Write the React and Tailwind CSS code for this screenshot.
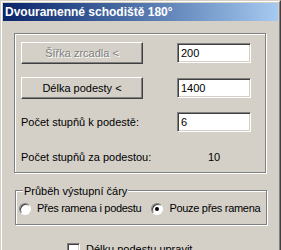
import React from "react";

const font = "font-['Liberation_Sans',Arial,sans-serif]";

function Btn({ children, disabled }) {
  return (
    <div className="w-[122px] h-[22px] flex items-center justify-center border border-t-white border-l-white border-r-[#404040] border-b-[#404040] shadow-[inset_-1px_-1px_0_#808080]">
      <span
        className={
          disabled
            ? "text-[#808080] [text-shadow:1px_1px_0_#fff]"
            : "text-black"
        }
      >
        {children}
      </span>
    </div>
  );
}

function Field({ value }) {
  return (
    <div className="w-[74px] h-[20px] bg-white flex items-center pl-[3px] border border-t-[#808080] border-l-[#808080] border-r-white border-b-white shadow-[inset_1px_1px_0_#404040,inset_-1px_-1px_0_#d4d0c8]">
      {value}
    </div>
  );
}

function Radio({ checked, label }) {
  return (
    <div className="flex items-center gap-[6px] shrink-0 whitespace-nowrap">
      <div className="w-[12px] h-[12px] shrink-0 rounded-full bg-white flex items-center justify-center border border-t-[#808080] border-l-[#808080] border-r-white border-b-white shadow-[inset_1px_1px_0_#404040]">
        {checked && <div className="w-[4px] h-[4px] rounded-full bg-black" />}
      </div>
      <span className="tracking-[-0.3px]">{label}</span>
    </div>
  );
}

export default function App() {
  return (
    <div
      className={`${font} text-[11px] text-black w-[281px] h-[250px] overflow-hidden bg-[#d4d0c8] border border-t-[#d4d0c8] border-l-[#d4d0c8] border-r-[#404040] border-b-0`}
    >
      <div className="h-full border border-t-white border-l-white border-r-[#808080] border-b-0 px-px pt-px">
        <div className="h-[18px] flex items-center pl-[2px] bg-gradient-to-r from-[#0a246a] to-[#a6caf0] text-white font-bold text-[12px]">
          Dvouramenné schodiště 180°
        </div>

        <div className="px-[11px] pt-[12px]">
          {/* rozměry */}
          <div className="w-[252px] h-[140px] border border-[#808080] shadow-[inset_1px_1px_0_#fff,1px_1px_0_#fff] px-[6px] pt-[8px]">
            <div className="flex items-center justify-between pr-[8px]">
              <Btn disabled>Šířka zrcadla &lt;</Btn>
              <Field value="200" />
            </div>
            <div className="flex items-center justify-between pr-[8px] mt-[13px]">
              <Btn>Délka podesty &lt;</Btn>
              <Field value="1400" />
            </div>
            <div className="flex items-center justify-between pr-[8px] mt-[13px]">
              <span>Počet stupňů k podestě:</span>
              <Field value="6" />
            </div>
            <div className="flex items-center justify-between pr-[8px] mt-[17px]">
              <span>Počet stupňů za podestou:</span>
              <span className="w-[74px] text-center">10</span>
            </div>
          </div>

          {/* výstupní čára */}
          <div className="relative mt-[17px] ml-px w-[252px] h-[35px] border border-[#808080] shadow-[inset_1px_1px_0_#fff,1px_1px_0_#fff] flex items-center gap-[10px] pl-[3px] pt-[2px]">
            <span className="absolute left-[7px] top-[-8px] px-[1px] bg-[#d4d0c8] whitespace-nowrap">
              Průběh výstupní čáry
            </span>
            <Radio label="Přes ramena i podestu" />
            <Radio checked label="Pouze přes ramena" />
          </div>

          <div className="flex items-center gap-[6px] ml-[53px] mt-[16px] whitespace-nowrap">
            <div className="w-[13px] h-[13px] shrink-0 bg-white border border-t-[#808080] border-l-[#808080] border-r-white border-b-white shadow-[inset_1px_1px_0_#404040,inset_-1px_-1px_0_#d4d0c8]" />
            <span>Délku podestu upravit</span>
          </div>
        </div>
      </div>
    </div>
  );
}
